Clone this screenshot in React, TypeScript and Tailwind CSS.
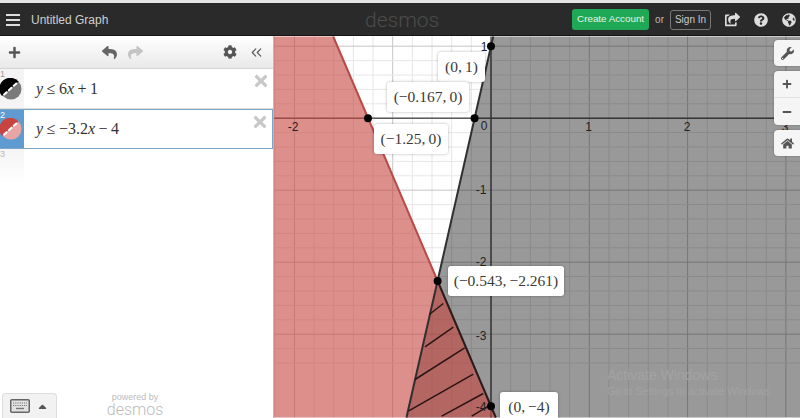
import React from 'react';
import { ChevronsLeft } from 'lucide-react';
import { FaCog, FaGlobeAmericas, FaHome, FaMinus, FaPlus, FaQuestionCircle, FaReply, FaShare, FaShareSquare, FaTimes, FaWrench, FaCaretUp } from 'react-icons/fa';

const originX = 491;
const originY = 118.7;
const unitX = 98.3;
const unitY = 72;

const px = (x: number) => originX + x * unitX;
const py = (y: number) => originY - y * unitY;

const xGrid = Array.from({ length: 40 }, (_, i) => i - 12);
const yGrid = Array.from({ length: 40 }, (_, i) => i - 22);

const hatches = [
  [429.3, 315, 443.3, 304],
  [425, 347.3, 453.3, 327.7],
  [415, 380, 464.7, 348.3],
  [408.3, 411.7, 473.3, 374.7],
  [441.7, 416.7, 483.3, 394],
  [471.7, 416.7, 488.3, 406.7],
];

const points = [
  [368, 118.7],
  [474.6, 118.7],
  [491, 46.7],
  [437.6, 281.5],
  [491, 406.7],
];

const xTicks = [
  { t: '-2', x: 293, y: 131 },
  { t: '0', x: 484, y: 130 },
  { t: '1', x: 588.5, y: 131 },
  { t: '2', x: 687, y: 131 },
  { t: '3', x: 785, y: 131 },
  { t: '1', x: 484, y: 51 },
  { t: '-1', x: 481, y: 194 },
  { t: '-2', x: 481, y: 266 },
  { t: '-3', x: 481, y: 340 },
  { t: '-4', x: 481, y: 411 },
];

const Graph = () => (
  <svg viewBox="274 37 526 381" className="absolute inset-0 w-full h-full">
    <rect x="274" y="37" width="526" height="381" fill="#ffffff" />
    {xGrid.map((i) => {
      const x = originX + (i * unitX) / 5;
      return <line key={i} x1={x} x2={x} y1="37" y2="418" stroke={i % 5 === 0 ? '#c4c4c4' : '#e6e6e6'} strokeWidth="1" />;
    })}
    {yGrid.map((i) => {
      const y = originY + (i * unitY) / 5;
      return <line key={i} x1="274" x2="800" y1={y} y2={y} stroke={i % 5 === 0 ? '#c4c4c4' : '#e6e6e6'} strokeWidth="1" />;
    })}
    <line x1={originX} x2={originX} y1="37" y2="418" stroke="#5a5a5a" strokeWidth="1.5" />
    <line x1="274" x2="800" y1={originY} y2={originY} stroke="#5a5a5a" strokeWidth="1.5" />

    {/* y <= 6x + 1 */}
    <polygon points={`${px(0.0225)},37 800,37 800,418 ${px(-0.86)},418`} fill="#000000" fillOpacity="0.4" />
    {/* y <= -3.2x - 4 */}
    <polygon points={`274,37 ${px(-1.605)},37 ${px(0.049)},418 274,418`} fill="#c74440" fillOpacity="0.6" />
    <line x1={px(-1.605)} y1="37" x2={px(-0.543)} y2={py(-2.261)} stroke="#b84a46" strokeWidth="2" />
    <line x1={px(-0.543)} y1={py(-2.261)} x2={px(0.049)} y2="418" stroke="#2a1a1a" strokeWidth="2" />
    <line x1={px(0.0225)} y1="37" x2={px(-0.86)} y2="418" stroke="#303030" strokeWidth="2" />

    {hatches.map((h, i) => (
      <line key={i} x1={h[0]} y1={h[1]} x2={h[2]} y2={h[3]} stroke="#2a1414" strokeWidth="1.5" />
    ))}

    {xTicks.map((t, i) => (
      <text key={i} x={t.x} y={t.y} textAnchor="middle" fontSize="12" fill="#222222" fontFamily="Liberation Sans, sans-serif">
        {t.t}
      </text>
    ))}

    {points.map((p, i) => (
      <circle key={i} cx={p[0]} cy={p[1]} r="4" fill="#000000" />
    ))}
  </svg>
);

const PointLabel = ({ className, children }: { className: string; children: React.ReactNode }) => (
  <div className={`absolute h-[30px] flex items-center justify-center bg-white rounded-[3px] shadow-[0_0_3px_rgba(0,0,0,0.3)] text-[15.5px] text-[#3a3a3a] whitespace-nowrap font-['Liberation_Serif',serif] ${className}`}>
    {children}
  </div>
);

const ToolButton = ({ className, children }: { className: string; children: React.ReactNode }) => (
  <div className={`absolute right-0 w-[26px] flex flex-col bg-[#f5f5f5] rounded-l-[4px] shadow-[0_0_2px_rgba(0,0,0,0.35)] text-[#555] ${className}`}>
    {children}
  </div>
);

const Swatch = ({ dark, light }: { dark: string; light: string }) => (
  <svg width="22" height="22" viewBox="0 0 22 22">
    <circle cx="11" cy="11" r="10.5" fill={light} />
    <path d="M2 18 A10.5 10.5 0 0 1 18.5 3.5 Z" fill={dark} />
    <line x1="3.5" y1="17" x2="18" y2="4" stroke="#ffffff" strokeWidth="2" strokeDasharray="5 1.5" />
  </svg>
);

const KeyboardIcon = () => (
  <svg width="20" height="14" viewBox="0 0 20 14">
    <rect x="0.75" y="0.75" width="18.5" height="12.5" rx="1" fill="#e2e2e2" stroke="#666666" strokeWidth="1.5" />
    <line x1="3" y1="4" x2="17" y2="4" stroke="#777777" strokeWidth="1.2" strokeDasharray="1.2 1" />
    <line x1="3" y1="6.5" x2="17" y2="6.5" stroke="#777777" strokeWidth="1.2" strokeDasharray="1.2 1" />
    <line x1="6" y1="9.5" x2="14" y2="9.5" stroke="#777777" strokeWidth="1.4" />
  </svg>
);

const Expression = ({ n, active, swatch, children }: { n: number; active?: boolean; swatch: React.ReactNode; children: React.ReactNode }) => (
  <div className={`h-10 flex border-b ${active ? 'border border-l-0 border-[#7ba6c8]' : 'border-[#dedede]'}`}>
    <div className={`relative w-6 shrink-0 flex items-center pl-0 ${active ? 'bg-[#5f9bd0] text-white' : 'bg-[#f4f4f4] text-[#999]'}`}>
      <span className="absolute left-0 top-0 text-[9px] leading-[11px]">{n}</span>
      {swatch}
    </div>
    <div className="relative flex-1 flex items-center pl-3 text-[16px] [word-spacing:-0.5px] text-[#333] font-['Liberation_Serif',serif] bg-white">
      {children}
      <FaTimes className="absolute right-[3px] top-[3px] text-[#c8c8c8]" size={18} />
    </div>
  </div>
);

export default function App() {
  return (
    <div className="w-[800px] h-[418px] flex flex-col overflow-hidden bg-white font-['Liberation_Sans',Arial,sans-serif]">
      <div className="h-[3px] bg-[#e4e4e4]" />
      <header className="relative h-[33px] shrink-0 flex items-center pt-[1px] bg-[#2a2a2a] border-b border-[#151515] text-[#cfcfcf]">
        <div className="ml-[6px] w-[14px] flex flex-col gap-[3px]">
          <div className="h-[2px] bg-[#ddd]" />
          <div className="h-[2px] bg-[#ddd]" />
          <div className="h-[2px] bg-[#ddd]" />
        </div>
        <span className="ml-[11px] text-[12px]">Untitled Graph</span>
        <span className="absolute left-[365px] top-[4px] text-[21px] leading-[26px] font-light text-[#4c4c4c] font-['Roboto',sans-serif]">desmos</span>
        <div className="ml-auto flex items-center">
          <div className="w-[77px] h-[21px] flex items-center justify-center rounded-[3px] bg-[#1fa855] text-[#e6f5ea] text-[9.8px]">Create Account</div>
          <span className="ml-[6px] text-[10px] text-[#bbb]">or</span>
          <div className="ml-[6px] w-[41px] h-[20px] flex items-center justify-center rounded-[3px] border border-[#777] text-[10px] text-[#ccc]">Sign In</div>
          <FaShareSquare className="ml-[14px] text-[#ddd]" size={15} />
          <FaQuestionCircle className="ml-[14px] text-[#ddd]" size={14} />
          <FaGlobeAmericas className="ml-[14px] mr-[4px] text-[#ddd]" size={14} />
        </div>
      </header>
      <main className="flex-1 flex min-h-0">
        <aside className="relative w-[274px] shrink-0 flex flex-col bg-white border-r border-[#bbb]">
          <div className="relative h-[33px] shrink-0 flex items-center px-2 text-[#555] bg-gradient-to-b from-white to-[#e9e9e9] border-b border-[#d4d4d4]">
            <FaPlus size={13} />
            <div className="ml-[81px] flex items-center gap-[11px]">
              <FaReply className="text-[#666]" size={15} />
              <FaShare className="text-[#c4c4c4]" size={15} />
            </div>
            <FaCog className="ml-auto text-[#555]" size={14} />
            <ChevronsLeft className="ml-[11px] text-[#555]" size={17} strokeWidth={1.6} />
          </div>
          <Expression n={1} swatch={<Swatch dark="#000000" light="#7a7a7a" />}>
            <span><i>y</i> ≤ 6<i>x</i> + 1</span>
          </Expression>
          <Expression n={2} active swatch={<Swatch dark="#c74440" light="#e8a5a3" />}>
            <span><i>y</i> ≤ −3.2<i>x</i> − 4</span>
          </Expression>
          <div className="h-[34px] w-6 bg-gradient-to-b from-[#f4f4f4] to-white text-[#bbb] text-[9px] leading-[11px]">3</div>
          <div className="mt-auto flex items-end">
            <div className="ml-[2px] w-[55px] h-[25px] flex items-center justify-center gap-[6px] bg-[#f2f2f2] border border-b-0 border-[#ddd] rounded-t-[4px] text-[#555]">
              <KeyboardIcon />
              <FaCaretUp size={13} />
            </div>
            <div className="ml-[50px] w-[56px] flex flex-col items-center text-[#bbb] mb-[1px]">
              <div className="text-[9px] leading-[9px]">powered by</div>
              <div className="text-[16px] leading-[15px] font-light font-['Roboto',sans-serif]">desmos</div>
            </div>
          </div>
        </aside>
        <section className="relative flex-1 overflow-hidden">
          <Graph />
          <PointLabel className="left-[164px] top-[16px] w-[47px]"><span>(0,&thinsp;1)</span></PointLabel>
          <PointLabel className="left-[113px] top-[46px] w-[82px]"><span>(−0.167,&thinsp;0)</span></PointLabel>
          <PointLabel className="left-[100px] top-[88px] w-[74px]"><span>(−1.25,&thinsp;0)</span></PointLabel>
          <PointLabel className="left-[174px] top-[230px] w-[116px]"><span>(−0.543,&thinsp;−2.261)</span></PointLabel>
          <PointLabel className="left-[226px] top-[356px] w-[58px]"><span>(0,&thinsp;−4)</span></PointLabel>

          <ToolButton className="top-[4px] h-[26px] items-center justify-center"><FaWrench size={13} /></ToolButton>
          <ToolButton className="top-[35px] h-[54px]">
            <div className="h-[27px] flex items-center justify-center border-b border-[#e2e2e2]"><FaPlus size={10} /></div>
            <div className="h-[27px] flex items-center justify-center"><FaMinus size={10} /></div>
          </ToolButton>
          <ToolButton className="top-[94px] h-[26px] items-center justify-center"><FaHome size={13} /></ToolButton>

          <div className="absolute left-[333px] top-[331px] text-[#a3a3a3]">
            <div className="text-[14px] leading-[16px]">Activate Windows</div>
            <div className="text-[10.5px] leading-[14px] mt-[1px]">Go to Settings to activate Windows.</div>
          </div>
        </section>
      </main>
    </div>
  );
}
